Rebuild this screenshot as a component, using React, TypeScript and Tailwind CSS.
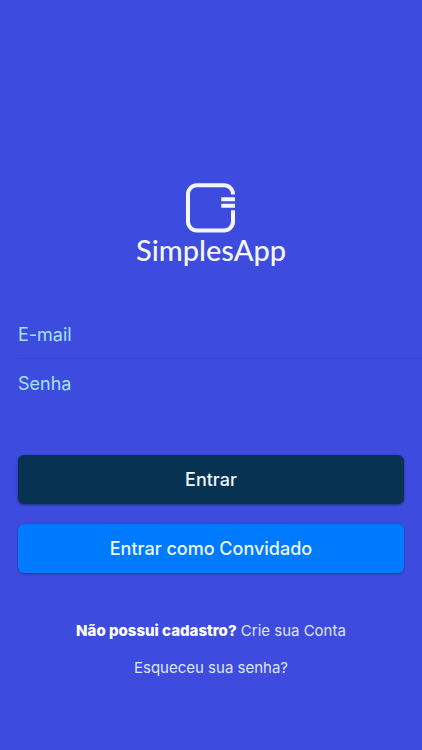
import React, { useState } from 'react';

const Logo = () => (
  <div className="flex flex-col items-center text-[#f4f5fd]">
    <svg width="50" height="50" viewBox="0 0 50 50" fill="none" aria-hidden="true">
      <path
        d="M47 11.5V11.3A9 9 0 0 0 38 2.3H11A9 9 0 0 0 2 11.3V38.5A9 9 0 0 0 11 47.5H38A9 9 0 0 0 47 38.5V27.2"
        stroke="currentColor"
        strokeWidth="4"
      />
      <path d="M35.3 16.2H49M35.3 22.8H49" stroke="currentColor" strokeWidth="4" />
    </svg>
    <h1 className="font-['Lato',sans-serif] text-[29px] leading-[34px] font-medium">SimplesApp</h1>
  </div>
);

interface FieldProps {
  id: string;
  label: string;
  type: string;
  value: string;
  onChange: (value: string) => void;
}

const Field = ({ id, label, type, value, onChange }: FieldProps) => (
  <div>
    <input
      id={id}
      type={type}
      aria-label={label}
      placeholder={label}
      value={value}
      onChange={(e) => onChange(e.target.value)}
      className="block h-12 w-full bg-transparent text-lg text-[#a5e3f8] outline-none placeholder:text-[#a5e3f8]"
    />
  </div>
);

export default function App() {
  const [email, setEmail] = useState('');
  const [password, setPassword] = useState('');

  return (
    <main className="min-h-screen bg-[#3d4cdf] pt-[183px] pb-16 font-['Inter',sans-serif]">
      <Logo />

      <form onSubmit={(e) => e.preventDefault()}>
        <div className="mt-[43px] ml-[18px] divide-y divide-[#3848d0]">
          <Field id="email" label="E-mail" type="email" value={email} onChange={setEmail} />
          <Field id="password" label="Senha" type="password" value={password} onChange={setPassword} />
        </div>

        <div className="mt-12 flex flex-col gap-5 px-[18px] text-lg font-medium text-[#eaf8ff]">
          <button type="submit" className="h-[49px] rounded-md bg-[#083252] shadow-[0_1px_3px_rgba(0,0,0,0.45)]">
            Entrar
          </button>
          <button type="button" className="h-[49px] rounded-md bg-[#007bff] shadow-[0_1px_3px_rgba(0,0,0,0.3)]">
            Entrar como Convidado
          </button>
        </div>
      </form>

      <nav className="mt-12 flex flex-col items-center gap-[17px] text-[15px] leading-5 text-[#dfe6fb]">
        <a href="#cadastro">
          <strong className="font-extrabold text-white">Não possui cadastro?</strong> Crie sua Conta
        </a>
        <a href="#senha">Esqueceu sua senha?</a>
      </nav>
    </main>
  );
}
